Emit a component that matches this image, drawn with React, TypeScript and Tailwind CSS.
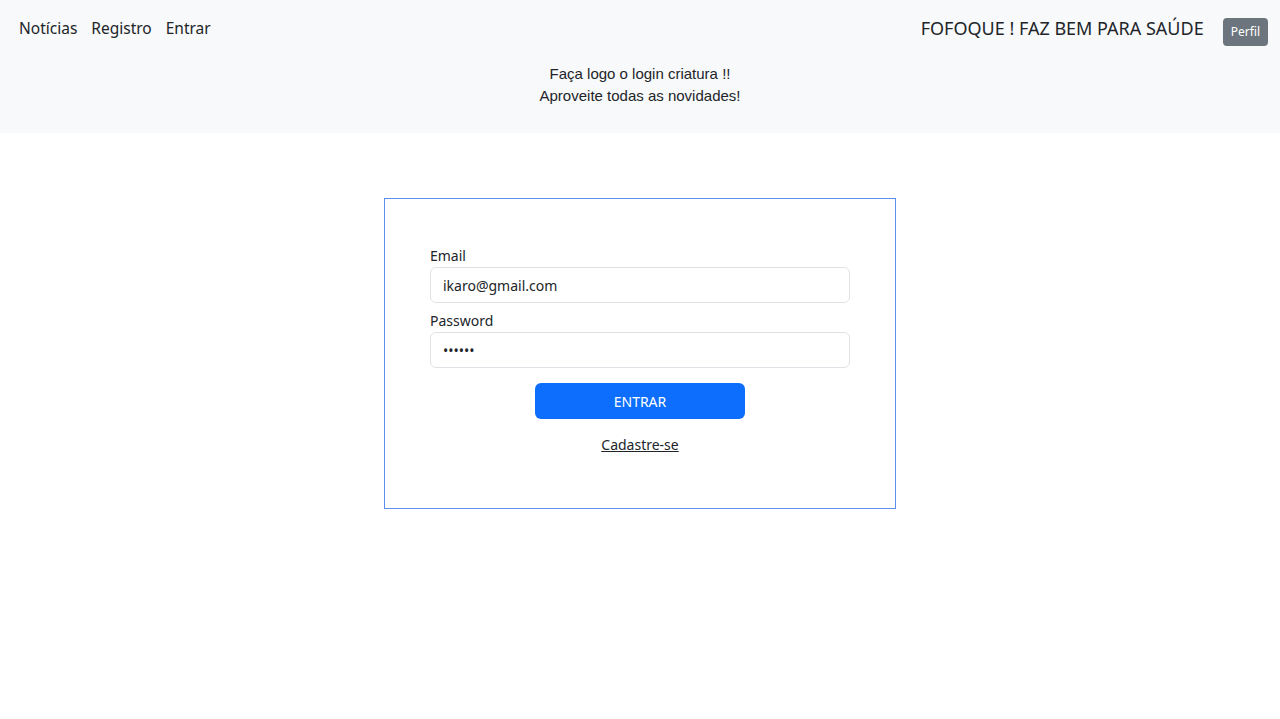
export default function App() {
  return (
    <div className="min-h-[719px] bg-white text-[#212529] font-['Noto_Sans',sans-serif]">
      <header className="bg-[#f8f9fa] h-[133px]">
        <nav className="flex items-center justify-between pl-[19px] pr-[12px] pt-[10px]">
          <div className="flex items-center gap-[14px] text-[15.5px] leading-[28px]">
            <a className="text-[#212529]">Notícias</a>
            <a className="text-[#212529]">Registro</a>
            <a className="text-[#212529]">Entrar</a>
          </div>
          <div className="flex items-center">
            <span className="text-[18px] leading-[28px] mr-[19px]">
              FOFOQUE ! FAZ BEM PARA SAÚDE
            </span>
            <button className="bg-[#6c757d] text-white text-[12px] rounded-[4px] h-[28px] px-[8px] mt-[8px]">
              Perfil
            </button>
          </div>
        </nav>
        <div className="text-center text-[15px] leading-[22px] mt-[17px] font-['Liberation_Sans',sans-serif] text-[#212529]">
          <p>Faça logo o login criatura !!</p>
          <p>Aproveite todas as novidades!</p>
        </div>
      </header>
      <main className="flex justify-center pt-[65px]">
        <div className="w-[512px] h-[311px] border border-[#5b8ff0] px-[45px] pt-[47px]">
          <form className="flex flex-col">
            <label className="text-[14px] leading-[20px] mb-[1px]">Email</label>
            <input
              className="h-[36px] w-full rounded-[6px] border border-[#dee2e6] px-[12px] text-[14px] outline-none"
              defaultValue="ikaro@gmail.com"
            />
            <label className="text-[14px] leading-[20px] mt-[8px] mb-[1px]">Password</label>
            <input
              type="password"
              className="h-[36px] w-full rounded-[6px] border border-[#dee2e6] px-[12px] text-[14px] outline-none"
              defaultValue="123456"
            />
            <button
              type="button"
              className="self-center mt-[15px] w-[210px] h-[36px] rounded-[6px] bg-[#0d6efd] text-white text-[14px]"
            >
              ENTRAR
            </button>
            <a className="self-center mt-[15px] text-[14px] underline text-[#212529]">Cadastre-se</a>
          </form>
        </div>
      </main>
    </div>
  );
}
